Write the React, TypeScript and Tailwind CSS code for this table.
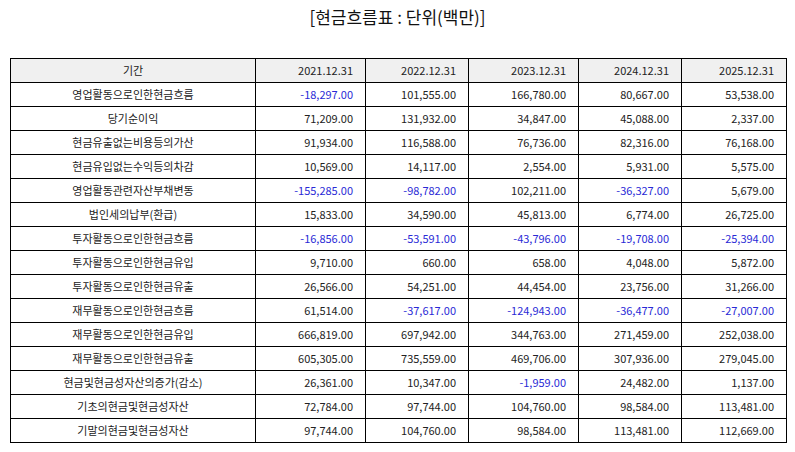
import React from "react";

const headers = ["기간", "2021.12.31", "2022.12.31", "2023.12.31", "2024.12.31", "2025.12.31"];
const rows: [string, string[]][] = [
  ["영업활동으로인한현금흐름", ["-18,297.00", "101,555.00", "166,780.00", "80,667.00", "53,538.00"]],
  ["당기순이익", ["71,209.00", "131,932.00", "34,847.00", "45,088.00", "2,337.00"]],
  ["현금유출없는비용등의가산", ["91,934.00", "116,588.00", "76,736.00", "82,316.00", "76,168.00"]],
  ["현금유입없는수익등의차감", ["10,569.00", "14,117.00", "2,554.00", "5,931.00", "5,575.00"]],
  ["영업활동관련자산부채변동", ["-155,285.00", "-98,782.00", "102,211.00", "-36,327.00", "5,679.00"]],
  ["법인세의납부(환급)", ["15,833.00", "34,590.00", "45,813.00", "6,774.00", "26,725.00"]],
  ["투자활동으로인한현금흐름", ["-16,856.00", "-53,591.00", "-43,796.00", "-19,708.00", "-25,394.00"]],
  ["투자활동으로인한현금유입", ["9,710.00", "660.00", "658.00", "4,048.00", "5,872.00"]],
  ["투자활동으로인한현금유출", ["26,566.00", "54,251.00", "44,454.00", "23,756.00", "31,266.00"]],
  ["재무활동으로인한현금흐름", ["61,514.00", "-37,617.00", "-124,943.00", "-36,477.00", "-27,007.00"]],
  ["재무활동으로인한현금유입", ["666,819.00", "697,942.00", "344,763.00", "271,459.00", "252,038.00"]],
  ["재무활동으로인한현금유출", ["605,305.00", "735,559.00", "469,706.00", "307,936.00", "279,045.00"]],
  ["현금및현금성자산의증가(감소)", ["26,361.00", "10,347.00", "-1,959.00", "24,482.00", "1,137.00"]],
  ["기초의현금및현금성자산", ["72,784.00", "97,744.00", "104,760.00", "98,584.00", "113,481.00"]],
  ["기말의현금및현금성자산", ["97,744.00", "104,760.00", "98,584.00", "113,481.00", "112,669.00"]],
];

export default function App() {
  return (
    <div
      className="w-[795px] h-[452px] bg-white text-[#222]"
      style={{ fontFamily: '"Noto Sans CJK KR", "Noto Sans", sans-serif' }}
    >
      <div className="h-[58px] pt-[5px] text-center text-[17px] leading-[24px] text-[#111]">
        [현금흐름표 : 단위(백만)]
      </div>
      <table className="ml-[10px] w-[776px] border-collapse table-fixed text-[11px]">
        <colgroup>
          <col className="w-[245px]" />
          <col className="w-[110px]" />
          <col className="w-[103px]" />
          <col className="w-[110px]" />
          <col className="w-[103px]" />
          <col className="w-[105px]" />
        </colgroup>
        <thead>
          <tr className="h-[24px] bg-[#f0f0f0]">
            {headers.map((h, i) => (
              <th
                key={h}
                className={`border border-black font-normal p-0 ${i === 0 ? "text-center" : "text-right pr-[12px]"}`}
              >
                {h}
              </th>
            ))}
          </tr>
        </thead>
        <tbody>
          {rows.map(([label, vals]) => (
            <tr key={label} className="h-[24px]">
              <td className="border border-black text-center p-0">{label}</td>
              {vals.map((v, j) => (
                <td
                  key={j}
                  className={`border border-black text-right p-0 pr-[12px] ${v.startsWith("-") ? "text-[#2a2ad6]" : ""}`}
                >
                  {v}
                </td>
              ))}
            </tr>
          ))}
        </tbody>
      </table>
    </div>
  );
}
